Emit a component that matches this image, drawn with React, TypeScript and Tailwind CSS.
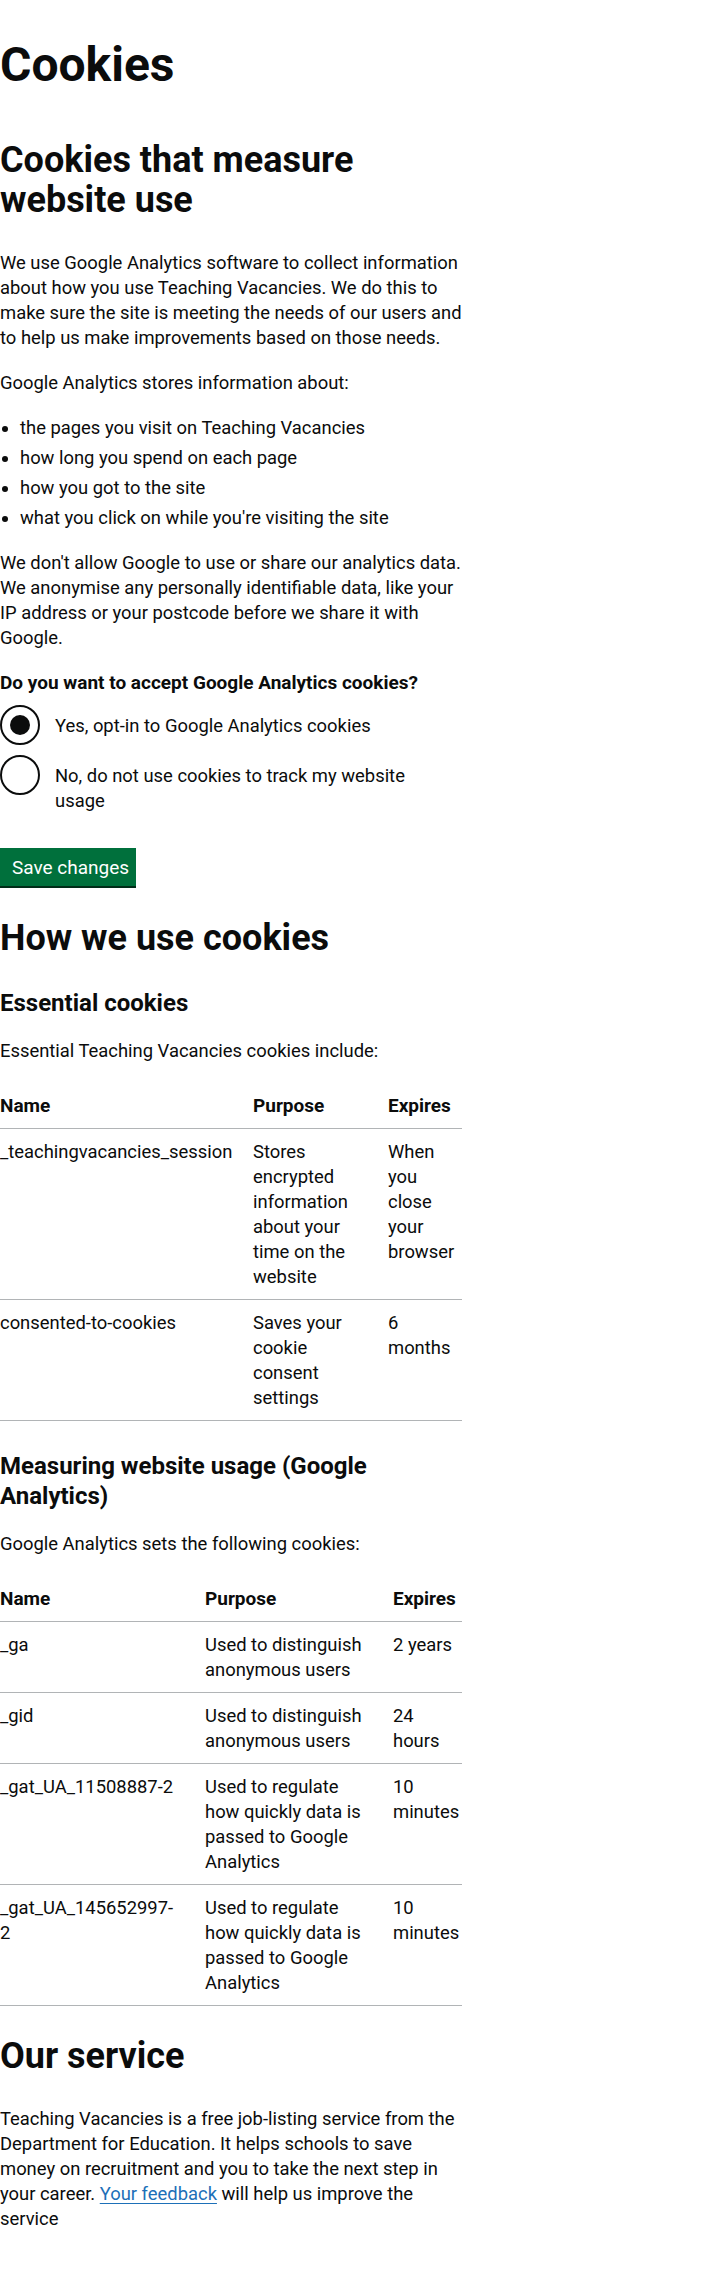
type Row = { name: string; purpose: string; expires: string }

const essentialCookies: Row[] = [
  {
    name: '_teachingvacancies_session',
    purpose: 'Stores encrypted information about your time on the website',
    expires: 'When you close your browser',
  },
  {
    name: 'consented-to-cookies',
    purpose: 'Saves your cookie consent settings',
    expires: '6 months',
  },
]

const analyticsCookies: Row[] = [
  { name: '_ga', purpose: 'Used to distinguish anonymous users', expires: '2 years' },
  { name: '_gid', purpose: 'Used to distinguish anonymous users', expires: '24 hours' },
  {
    name: '_gat_UA_11508887-2',
    purpose: 'Used to regulate how quickly data is passed to Google Analytics',
    expires: '10 minutes',
  },
  {
    // 参照画面と同じくハイフンの後で折り返す
    name: '_gat_UA_145652997-\n2',
    purpose: 'Used to regulate how quickly data is passed to Google Analytics',
    expires: '10 minutes',
  },
]

// セルの共通スタイル（govuk-table 相当）
const cell = 'text-left align-top py-[10px] pr-5 last:pr-0 border-b border-[#b1b4b6]'

function CookieTable({ rows, cols }: { rows: Row[]; cols: [string, string, string] }) {
  return (
    <table className="w-[462px] table-fixed border-collapse mb-[30px]">
      <colgroup>
        <col className={cols[0]} />
        <col className={cols[1]} />
        <col className={cols[2]} />
      </colgroup>
      <thead>
        <tr>
          <th className={`${cell} text-[19px] font-bold leading-[25px]`}>Name</th>
          <th className={`${cell} text-[19px] font-bold leading-[25px]`}>Purpose</th>
          <th className={`${cell} text-[19px] font-bold leading-[25px]`}>Expires</th>
        </tr>
      </thead>
      <tbody>
        {rows.map((r) => (
          <tr key={r.name}>
            <td className={`${cell} whitespace-pre-line`}>{r.name}</td>
            <td className={cell}>{r.purpose}</td>
            <td className={cell}>{r.expires}</td>
          </tr>
        ))}
      </tbody>
    </table>
  )
}

function Radio({ label, checked }: { label: string; checked?: boolean }) {
  return (
    <div className="flex items-start min-h-10 mb-[10px] last:mb-0">
      <span className="shrink-0 w-10 h-10 rounded-full border-2 border-[#0b0c0c] flex items-center justify-center">
        {checked && <span className="w-5 h-5 rounded-full bg-[#0b0c0c]" />}
      </span>
      <label className="block pt-2 pb-[5px] px-[15px]">{label}</label>
    </div>
  )
}

export default function App() {
  return (
    <div className="bg-white text-[#0b0c0c] font-['Roboto',sans-serif] text-[18.4px] leading-[25px] pt-10 pb-[60px]">
      <div className="w-[466px]">
        <h1 className="text-[48px] leading-[50px] font-bold mb-[50px]">Cookies</h1>

        <h2 className="text-[36px] leading-[40px] font-bold mb-[30px]">Cookies that measure website use</h2>
        <p className="mb-5">
          We use Google Analytics software to collect information about how you use Teaching Vacancies. We do this
          to make sure the site is meeting the needs of our users and to help us make improvements based on those
          needs.
        </p>
        <p className="mb-5">Google Analytics stores information about:</p>
        <ul className="list-disc pl-5 mb-5">
          <li className="mb-[5px]">the pages you visit on Teaching Vacancies</li>
          <li className="mb-[5px]">how long you spend on each page</li>
          <li className="mb-[5px]">how you got to the site</li>
          <li className="mb-[5px]">what you click on while you're visiting the site</li>
        </ul>
        <p className="mb-5">
          We don't allow Google to use or share our analytics data. We anonymise any personally identifiable data,
          like your IP address or your postcode before we share it with Google.
        </p>

        <fieldset className="mb-[30px]">
          <legend className="text-[19px] font-bold leading-[25px] mb-[10px]">
            Do you want to accept Google Analytics cookies?
          </legend>
          <Radio label="Yes, opt-in to Google Analytics cookies" checked />
          <Radio label="No, do not use cookies to track my website usage" />
        </fieldset>

        <button className="block w-[136px] whitespace-nowrap text-left bg-[#00703c] text-white text-[19px] leading-[19px] border-2 border-transparent px-[10px] pt-2 pb-[7px] shadow-[0_2px_0_#002d18] mb-8">
          Save changes
        </button>

        <h2 className="text-[36px] leading-[40px] font-bold mb-[30px]">How we use cookies</h2>
        <h3 className="text-[24px] leading-[30px] font-bold mb-5">Essential cookies</h3>
        <p className="mb-5">Essential Teaching Vacancies cookies include:</p>
        <CookieTable rows={essentialCookies} cols={['w-[253px]', 'w-[135px]', 'w-[74px]']} />

        <h3 className="text-[24px] leading-[30px] font-bold mb-5">Measuring website usage (Google Analytics)</h3>
        <p className="mb-5">Google Analytics sets the following cookies:</p>
        <CookieTable rows={analyticsCookies} cols={['w-[205px]', 'w-[188px]', 'w-[69px]']} />

        <h2 className="text-[36px] leading-[40px] font-bold mb-[30px]">Our service</h2>
        <p className="mb-5">
          Teaching Vacancies is a free job-listing service from the Department for Education. It helps schools to
          save money on recruitment and you to take the next step in your career.{' '}
          <a href="#" className="text-[#1d70b8] underline underline-offset-[3px]">
            Your feedback
          </a>{' '}
          will help us improve the service
        </p>
      </div>
    </div>
  )
}
